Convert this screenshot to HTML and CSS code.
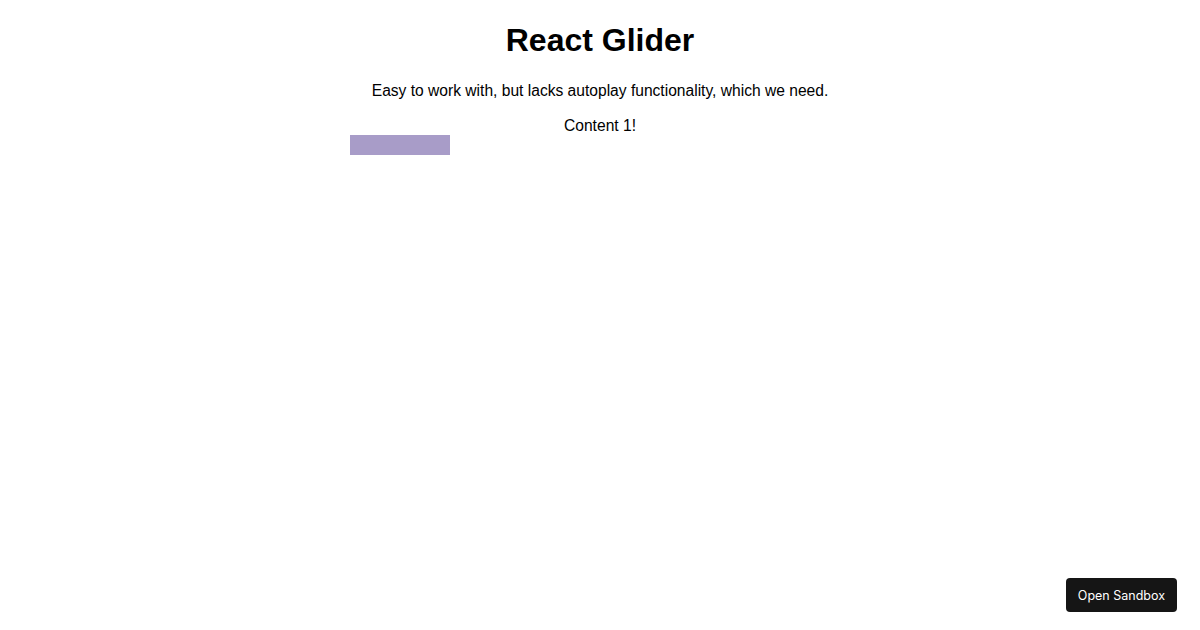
FILE: index.html
```html
<!DOCTYPE html>
<html lang="en">
<head>
  <meta charset="UTF-8">
  <title>React Glider</title>
  <link rel="stylesheet" href="styles.css">
</head>
<body>

  <div class="container">
    <h1>React Glider</h1>
    <p>Easy to work with, but lacks autoplay functionality, which we need.</p>

    <div class="glider">
      <div class="slide">Content 1!</div>
      <div class="track"></div>
    </div>
  </div>

  <a class="sandbox-btn" href="#">Open Sandbox</a>

</body>
</html>
```

FILE: styles.css
```css
body {
  font-family: 'Liberation Sans', Arial, Helvetica, sans-serif;
  color: #000;
  background: #fff;
  margin: 0;
}

.container {
  width: 500px;
  margin: 0 auto;
  text-align: center;
}

h1 {
  font-size: 32px;
  margin: 0 0 23px;
  padding-top: 22px;
}

p {
  font-size: 15.6px;
  margin: 16px 0 17px;
}

.slide {
  font-size: 15.6px;
  line-height: 18px;
}

.track {
  width: 100px;
  height: 20px;
  background: #a89cc8;
}

.sandbox-btn {
  position: fixed;
  right: 23px;
  bottom: 18px;
  background: #151515;
  color: #fff;
  font-family: Inter, 'Liberation Sans', sans-serif;
  font-size: 12.5px;
  line-height: 15px;
  text-decoration: none;
  padding: 9.5px 12px;
  border-radius: 4px;
}
```
